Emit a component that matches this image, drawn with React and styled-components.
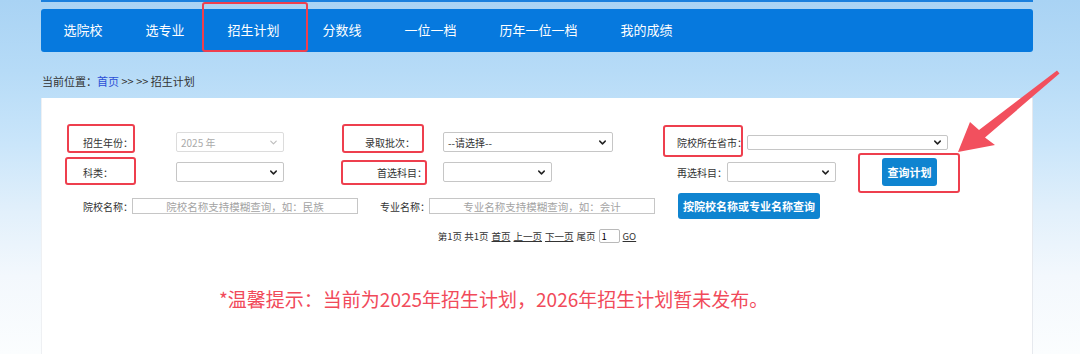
import React from 'react';
import styled, { createGlobalStyle } from 'styled-components';
import { ChevronDown } from 'lucide-react';

const GlobalStyle = createGlobalStyle`
  html, body {
    margin: 0;
    padding: 0;
  }
  body {
    font-family: "Noto Sans CJK SC", "Noto Sans", sans-serif;
    color: #333;
    overflow: hidden;
  }
`;

const Page = styled.div`
  position: relative;
  height: 354px;
  overflow: hidden;
  background: linear-gradient(180deg, #a9d3f4 0%, #b6dbf7 20%, #c9e5fa 40%, #e2f0fb 60%, #f3f8fd 78%, #fbfdfe 100%);
`;

const Wrap = styled.div`
  width: 992px;
  margin-left: 41px;
`;

const TopStrip = styled.div`
  height: 2px;
  background: #1a80de;
`;

const Nav = styled.ul`
  list-style: none;
  margin: 7px 0 0;
  padding: 0 0 0 1px;
  height: 43px;
  display: flex;
  align-items: center;
  background: #0679de;
  border-radius: 3px;
`;

const NavItem = styled.li`
  position: relative;
  padding: 0 21.5px;
  height: 43px;
  line-height: 41px;
  font-size: 13px;
  color: #fff;
`;

const Ring = styled.span`
  position: absolute;
  top: ${p => p.$t}px;
  bottom: ${p => p.$b}px;
  left: ${p => p.$l}px;
  right: ${p => p.$r}px;
  border: 2px solid #ee3f4e;
  border-radius: 3px;
  pointer-events: none;
`;

const Crumb = styled.div`
  padding: 21px 0 9px 1px;
  line-height: 16px;
  font-size: 11px;
  color: #333;
  a {
    color: #2b4fd6;
    text-decoration: none;
  }
`;

const Panel = styled.div`
  height: 260px;
  box-sizing: border-box;
  background: #fff;
  border-left: 1px solid #eef0f3;
  border-right: 1px solid #e6e9ee;
  padding-top: 29px;
`;

const Grid = styled.div`
  display: grid;
  grid-template-columns: 111px 166px 101px 220px 1fr;
  grid-auto-rows: 30px;
  padding-left: 23px;
  font-size: 10px;
`;

const Cell = styled.div`
  position: relative;
  display: flex;
  align-items: center;
  justify-content: ${p => (p.$right ? 'flex-end' : 'flex-start')};
  padding-left: ${p => p.$pl || 0}px;
  padding-right: ${p => p.$pr || 0}px;
`;

const Label = styled.span`
  position: relative;
  display: flex;
  align-items: center;
  height: 30px;
  padding-left: ${p => p.$pl || 0}px;
  white-space: nowrap;
`;

const Select = styled.div`
  width: ${p => p.$w}px;
  height: ${p => p.$h || 20}px;
  box-sizing: border-box;
  display: flex;
  align-items: center;
  justify-content: space-between;
  padding: 0 4px 0 4px;
  border: 1px solid ${p => (p.$disabled ? '#dcdcdc' : '#c6c6c6')};
  border-radius: 2px;
  background: #fff;
  font-size: 10px;
  color: ${p => (p.$disabled ? '#aaa' : '#333')};
  svg {
    flex: none;
    color: ${p => (p.$disabled ? '#bdbdbd' : '#222')};
  }
`;

const Button = styled.button`
  position: relative;
  flex: none;
  width: ${p => p.$w}px;
  height: ${p => p.$h}px;
  margin-left: ${p => p.$ml || 0}px;
  padding: 0;
  border: none;
  border-radius: 3px;
  background: #0f84d0;
  color: #fff;
  font-family: inherit;
  font-size: 11px;
  font-weight: bold;
  cursor: pointer;
`;

const SearchRow = styled.div`
  display: flex;
  align-items: center;
  height: 28px;
  margin-top: 5px;
  padding-left: 41px;
  font-size: 10px;
`;

const FieldLabel = styled.span`
  width: 49px;
  margin-left: ${p => p.$ml || 0}px;
  white-space: nowrap;
`;

const TextInput = styled.input`
  width: 226px;
  height: 16px;
  box-sizing: border-box;
  padding: 0;
  border: 1px solid #c6c6c6;
  font-family: inherit;
  font-size: 10.5px;
  text-align: center;
  &::placeholder {
    color: #a3a3a3;
  }
`;

const Pager = styled.div`
  display: flex;
  justify-content: center;
  align-items: center;
  gap: 3px;
  margin-top: 8px;
  height: 16px;
  font-size: 9.5px;
  color: #333;
`;

const PagerLink = styled.a`
  color: #333;
  text-decoration: underline;
`;

const PageInput = styled.input`
  width: 21px;
  height: 14px;
  box-sizing: border-box;
  padding: 0 2px;
  border: 1px solid #b9b9b9;
  border-radius: 2px;
  font-family: inherit;
  font-size: 9.5px;
`;

const Notice = styled.div`
  margin-top: 42px;
  padding-left: 177px;
  line-height: 26px;
  font-size: 19px;
  color: #f14a5a;
`;

const Arrow = styled.svg`
  position: absolute;
  left: 950px;
  top: 66px;
  width: 115px;
  height: 92px;
  pointer-events: none;
`;

const navItems = ['选院校', '选专业', '招生计划', '分数线', '一位一档', '历年一位一档', '我的成绩'];

const Chevron = ({ light }) => <ChevronDown size={11} strokeWidth={light ? 2.5 : 3.2} />;

export default function App() {
  return (
    <Page>
      <GlobalStyle />
      <Wrap>
        <TopStrip />
        <Nav>
          {navItems.map(item => (
            <NavItem key={item}>
              {item}
              {item === '招生计划' && <Ring $t={-7} $b={0} $l={-4} $r={-7} />}
            </NavItem>
          ))}
        </Nav>
        <Crumb>
          当前位置：<a href="#">首页</a> &gt;&gt; &gt;&gt; 招生计划
        </Crumb>
        <Panel>
          <Grid>
            <Cell $pl={18}>
              招生年份：
              <Ring $t={-3} $b={4} $l={2} $r={41} />
            </Cell>
            <Cell>
              <Select $w={108} $disabled>
                <span>2025 年</span>
                <Chevron light />
              </Select>
            </Cell>
            <Cell $right $pr={28}>
              录取批次：
              <Ring $t={-3} $b={4} $l={0} $r={19} />
            </Cell>
            <Cell>
              <Select $w={170}>
                <span>--请选择--</span>
                <Chevron />
              </Select>
            </Cell>
            <Cell>
              <Label $pl={14}>
                院校所在省市：
                <Ring $t={-2} $b={0} $l={0} $r={4} />
              </Label>
              <Select $w={201} $h={15}>
                <span />
                <Chevron />
              </Select>
            </Cell>

            <Cell $pl={18}>
              科类：
              <Ring $t={0} $b={2} $l={0} $r={40} />
            </Cell>
            <Cell>
              <Select $w={108}>
                <span />
                <Chevron />
              </Select>
            </Cell>
            <Cell $right $pr={16}>
              首选科目：
              <Ring $t={3} $b={2} $l={-1} $r={16} />
            </Cell>
            <Cell>
              <Select $w={109}>
                <span />
                <Chevron />
              </Select>
            </Cell>
            <Cell>
              <Label $pl={14}>再选科目：</Label>
              <Select $w={109}>
                <span />
                <Chevron />
              </Select>
              <Button $w={55} $h={28} $ml={46}>
                查询计划
                <Ring $t={-5} $b={-7} $l={-24} $r={-23} />
              </Button>
            </Cell>
          </Grid>

          <SearchRow>
            <FieldLabel>院校名称：</FieldLabel>
            <TextInput placeholder="院校名称支持模糊查询，如：民族" />
            <FieldLabel $ml={22}>专业名称：</FieldLabel>
            <TextInput placeholder="专业名称支持模糊查询，如：会计" />
            <Button $w={142} $h={26} $ml={23}>按院校名称或专业名称查询</Button>
          </SearchRow>

          <Pager>
            <span>第1页 共1页</span>
            <PagerLink>首页</PagerLink>
            <PagerLink>上一页</PagerLink>
            <PagerLink>下一页</PagerLink>
            <span>尾页</span>
            <PageInput defaultValue="1" />
            <PagerLink>GO</PagerLink>
          </Pager>

          <Notice>*温馨提示：当前为2025年招生计划，2026年招生计划暂未发布。</Notice>
        </Panel>
      </Wrap>
      <Arrow viewBox="950 66 115 92">
        <polygon
          points="958,152 970,122 979,130 1057,70.5 1059.5,73.5 985,137.5 995,145"
          fill="#f2505e"
        />
      </Arrow>
    </Page>
  );
}
